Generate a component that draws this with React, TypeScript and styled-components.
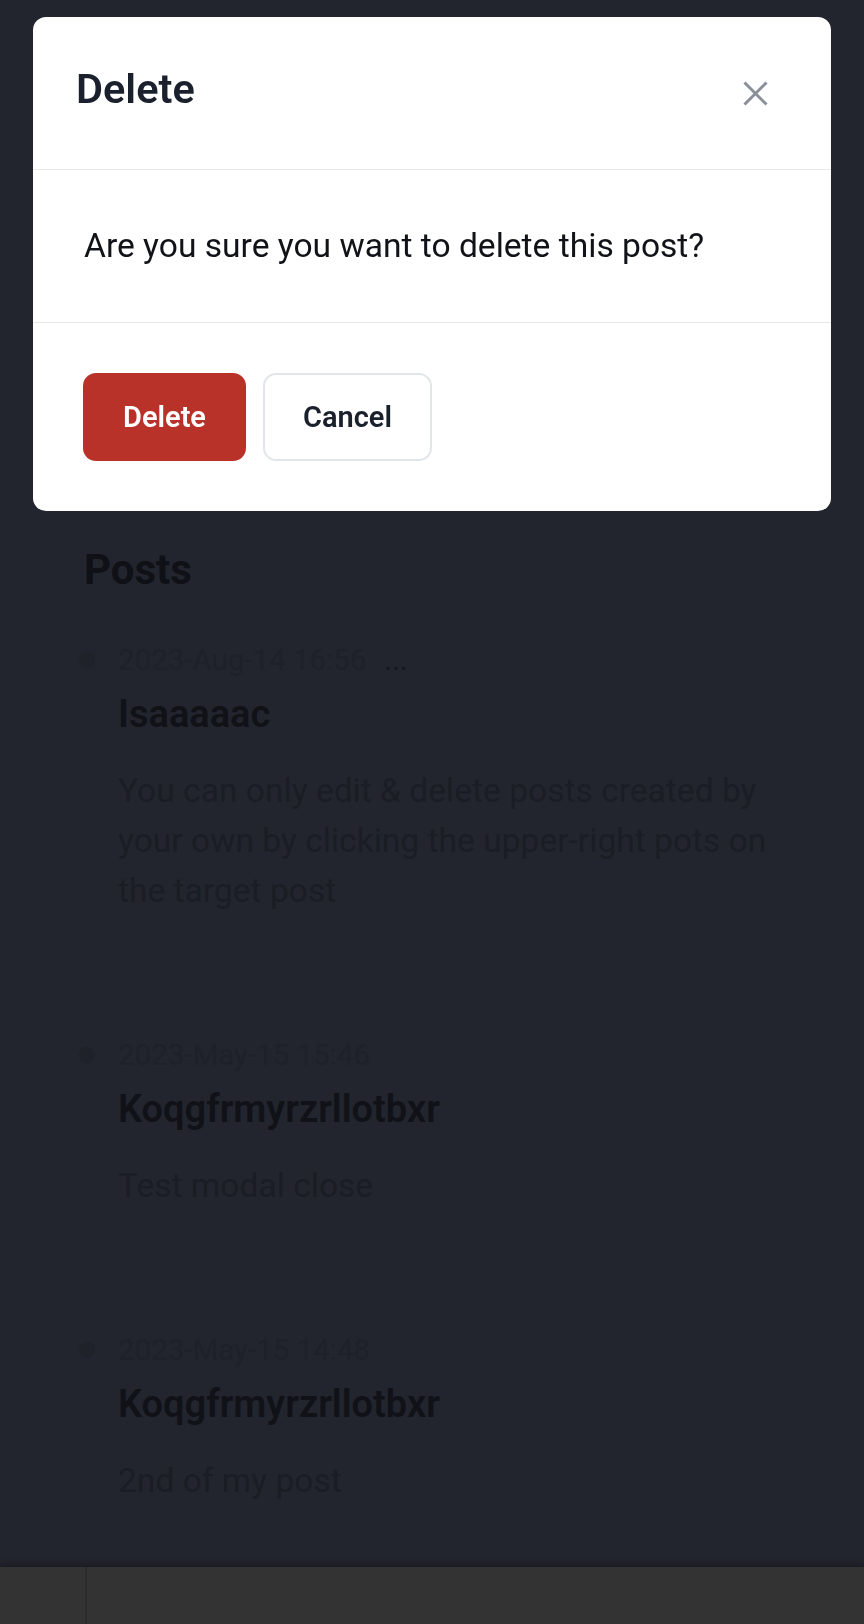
import React from "react";
import styled, { createGlobalStyle } from "styled-components";

const GlobalStyle = createGlobalStyle`
  *, *::before, *::after { box-sizing: border-box; }
  html, body {
    margin: 0;
    padding: 0;
    background: #22252e;
  }
  body {
    font-family: Roboto, "Noto Sans", "Liberation Sans", sans-serif;
  }
`;

const Page = styled.div`
  min-height: 1624px;
  display: flex;
  flex-direction: column;
  background: #22252e;
`;

const Main = styled.main`
  flex: 1;
  padding: 545px 64px 0 79px;
`;

const SectionTitle = styled.h2`
  margin: 0 0 47px 5px;
  font-size: 42px;
  line-height: 50px;
  font-weight: 700;
  color: #0f1117;
`;

const PostList = styled.div`
  display: flex;
  flex-direction: column;
  gap: 121px;
`;

const Post = styled.article`
  display: flex;
  flex-direction: column;
`;

const MetaRow = styled.div`
  display: flex;
  align-items: center;
  height: 36px;
`;

const Dot = styled.span`
  width: 16px;
  height: 16px;
  border-radius: 50%;
  background: #1f2229;
  margin-right: 23px;
  flex: none;
`;

const DateText = styled.span`
  font-size: 29.5px;
  line-height: 36px;
  color: #1e2129;
`;

const More = styled.span`
  margin-left: 18px;
  font-size: 29px;
  line-height: 36px;
  font-weight: 400;
  color: #15171e;
`;

const PostBody = styled.div`
  padding-left: 39px;
  display: flex;
  flex-direction: column;
`;

const PostTitle = styled.h3`
  margin: 13px 0 0;
  font-size: 38px;
  line-height: 46px;
  font-weight: 600;
  color: #101218;
`;

const PostText = styled.p`
  margin: 29px 0 0;
  font-size: 33.6px;
  line-height: 50px;
  font-weight: 400;
  color: #1a1d24;
`;

const BottomBar = styled.div`
  height: 57px;
  background: #333333;
  box-shadow: 0 -3px 6px rgba(0, 0, 0, 0.25);
  padding-left: 85px;
`;

const BarDivider = styled.div`
  height: 100%;
  border-left: 2px solid #2b2b2b;
`;

const Overlay = styled.div`
  position: fixed;
  inset: 0;
  display: flex;
  justify-content: center;
  align-items: flex-start;
  padding-top: 17px;
`;

const Dialog = styled.section`
  width: 798px;
  background: #ffffff;
  border-radius: 13px;
  overflow: hidden;
`;

const DialogHeader = styled.header`
  display: flex;
  align-items: flex-start;
  justify-content: space-between;
  padding: 48px 56px 56px 43px;
  border-bottom: 1px solid #e6e8ec;
`;

const DialogTitle = styled.h1`
  margin: 0;
  font-size: 41.5px;
  line-height: 48px;
  font-weight: 600;
  color: #1a202c;
`;

const CloseButton = styled.button`
  width: 40px;
  height: 40px;
  margin-top: 8px;
  padding: 0;
  border: none;
  background: transparent;
  display: flex;
  align-items: center;
  justify-content: center;
  cursor: pointer;
`;

const DialogBody = styled.div`
  padding: 51px 48px 51px 51px;
  font-size: 33.6px;
  line-height: 50px;
  color: #111318;
  border-bottom: 1px solid #e6e8ec;
`;

const DialogFooter = styled.footer`
  display: flex;
  gap: 17px;
  padding: 50px 50px 50px 50px;
`;

const Button = styled.button<{ $variant: "danger" | "outline" }>`
  height: 88px;
  padding: ${(p) => (p.$variant === "danger" ? "0 39px" : "0 38px")};
  border-radius: 13px;
  font-family: inherit;
  font-size: 29px;
  font-weight: 600;
  cursor: pointer;
  background: ${(p) => (p.$variant === "danger" ? "#b9322a" : "#ffffff")};
  color: ${(p) => (p.$variant === "danger" ? "#ffffff" : "#1a202c")};
  border: ${(p) =>
    p.$variant === "danger" ? "1px solid transparent" : "2px solid #e2e5ea"};
`;

const posts = [
  {
    date: "2023-Aug-14 16:56",
    mine: true,
    title: "Isaaaaac",
    text: "You can only edit & delete posts created by your own by clicking the upper-right pots on the target post",
  },
  {
    date: "2023-May-15 15:46",
    mine: false,
    title: "Koqgfrmyrzrllotbxr",
    text: "Test modal close",
  },
  {
    date: "2023-May-15 14:48",
    mine: false,
    title: "Koqgfrmyrzrllotbxr",
    text: "2nd of my post",
  },
];

export default function App() {
  return (
    <>
      <GlobalStyle />
      <Page>
        <Main>
          <SectionTitle>Posts</SectionTitle>
          <PostList>
            {posts.map((p, i) => (
              <Post key={i}>
                <MetaRow>
                  <Dot />
                  <DateText>{p.date}</DateText>
                  {p.mine && <More>...</More>}
                </MetaRow>
                <PostBody>
                  <PostTitle>{p.title}</PostTitle>
                  <PostText>{p.text}</PostText>
                </PostBody>
              </Post>
            ))}
          </PostList>
        </Main>
        <BottomBar>
          <BarDivider />
        </BottomBar>
      </Page>
      <Overlay>
        <Dialog role="dialog" aria-modal="true">
          <DialogHeader>
            <DialogTitle>Delete</DialogTitle>
            <CloseButton aria-label="Close">
              <svg width="25" height="25" viewBox="0 0 25 25">
                <path
                  d="M1.5 1.5 L23.5 23.5 M23.5 1.5 L1.5 23.5"
                  stroke="#8a8f99"
                  strokeWidth="3"
                  fill="none"
                />
              </svg>
            </CloseButton>
          </DialogHeader>
          <DialogBody>Are you sure you want to delete this post?</DialogBody>
          <DialogFooter>
            <Button $variant="danger">Delete</Button>
            <Button $variant="outline">Cancel</Button>
          </DialogFooter>
        </Dialog>
      </Overlay>
    </>
  );
}
